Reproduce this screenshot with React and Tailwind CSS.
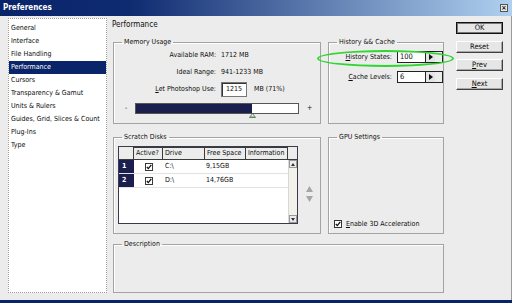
import React from 'react';

const items = [
  'General',
  'Interface',
  'File Handling',
  'Performance',
  'Cursors',
  'Transparency & Gamut',
  'Units & Rulers',
  'Guides, Grid, Slices & Count',
  'Plug-Ins',
  'Type',
];

function Check() {
  return (
    <span className="inline-flex h-[8px] w-[8px] items-center justify-center border border-[#3a3a3a] bg-white">
      <svg width="6" height="6" viewBox="0 0 6 6">
        <path d="M0.8 3 L2.3 4.6 L5.3 0.8" fill="none" stroke="#111" strokeWidth="1.3" />
      </svg>
    </span>
  );
}

function Group({ title, className, children }) {
  return (
    <fieldset className={`border border-[#a3a3a3] shadow-[inset_1px_1px_0_#fff] ${className}`}>
      <legend className="ml-[8px] px-[2px] text-[7px] leading-[9px]">{title}</legend>
      {children}
    </fieldset>
  );
}

function Spin({ value }) {
  return (
    <div className="flex h-[12px] border border-[#222]">
      <div className="w-[27px] bg-white pl-[2px] text-[7.5px] leading-[10px]">{value}</div>
      <div className="flex w-[10px] items-center justify-center border-l border-[#222] bg-[#e4e4e4]">
        <svg width="4" height="6" viewBox="0 0 4 6">
          <path d="M0 0 L4 3 L0 6 Z" fill="#111" />
        </svg>
      </div>
    </div>
  );
}

function Btn({ children, primary }) {
  if (primary) {
    return (
      <div className="h-[12px] w-[47px] border border-[#111]">
        <div className="flex h-full items-center justify-center border border-[#777] bg-[#e6e6e6] text-[7.5px]">
          {children}
        </div>
      </div>
    );
  }
  return (
    <div className="flex h-[12px] w-[47px] items-center justify-center border border-t-white border-l-white border-r-[#404040] border-b-[#404040] bg-[#e6e6e6] text-[7.5px] shadow-[inset_-1px_-1px_0_#a8a8a8]">
      {children}
    </div>
  );
}

export default function App() {
  return (
    <div className="relative flex h-[303px] w-[512px] flex-col overflow-hidden border-b-[3px] border-[#0a246a] bg-[#ececec] font-['DejaVu_Sans_Condensed','DejaVu_Sans','Liberation_Sans',sans-serif] text-[7px] text-[#0c0c0c]">
      <div className="flex h-[16px] shrink-0 items-center justify-between bg-[linear-gradient(90deg,#0a246a_0%,#0e2a70_25%,#b0d0f0_100%)] pl-[3px] pr-[4px]">
        <span className="text-[8px] font-bold text-white">Preferences</span>
        <span className="flex h-[8px] w-[8px] items-center justify-center border border-[#555] bg-[#e8e8e8] text-[7px] leading-none font-bold">×</span>
      </div>

      <div className="flex flex-1 border-r border-[#9a9a9a]">
        <div className="ml-[8px] mt-[2px] h-[275px] w-[99px] border border-dotted border-[#9c9c9c] bg-white pt-[3px]">
          {items.map((it) => (
            <div
              key={it}
              className={`h-[13px] pl-[2px] leading-[13px] whitespace-nowrap ${it === 'Performance' ? 'bg-[#0a246a] text-white' : ''}`}
            >
              {it}
            </div>
          ))}
        </div>

        <div className="ml-[6px] flex w-[331px] flex-col">
          <div className="-ml-[1px] mt-[4px] h-[10px] text-[8px] leading-[10px]">Performance</div>

          <div className="mt-[8px] flex gap-[7px]">
            <Group title="Memory Usage" className="h-[86px] w-[208px]">
              <div className="grid grid-cols-[102px_auto] gap-x-[5px]">
                <div className="h-[17px] text-right leading-[17px]">Available RAM:</div>
                <div className="h-[17px] leading-[17px]">1712 MB</div>
                <div className="h-[17px] text-right leading-[17px]">Ideal Range:</div>
                <div className="h-[17px] leading-[17px]">941-1233 MB</div>
                <div className="h-[17px] text-right leading-[17px]">
                  <u>L</u>et Photoshop Use:
                </div>
                <div className="flex h-[17px] items-center">
                  <div className="h-[15px] w-[26px] border border-[#777] bg-white text-center leading-[13px] shadow-[inset_1px_1px_0_#333]">1215</div>
                  <span className="ml-[7px]">MB (71%)</span>
                </div>
              </div>
              <div className="mt-[5px] flex items-center pl-[11px]">
                <span className="w-[10px] leading-none">-</span>
                <div className="relative h-[11px] w-[164px] border border-[#555] bg-white">
                  <div className="h-full w-[116px] bg-[#1b1f4d]" />
                  <svg className="absolute left-[113px] top-[9px]" width="7" height="5" viewBox="0 0 7 5">
                    <path d="M3.5 0.5 L6.5 4.5 L0.5 4.5 Z" fill="#f4f4f4" stroke="#555" strokeWidth="0.8" />
                    <path d="M1.5 4 L5.5 4" stroke="#3a3" strokeWidth="1" />
                  </svg>
                </div>
                <span className="ml-[8px] leading-none">+</span>
              </div>
            </Group>

            <Group title="History && Cache" className="h-[86px] w-[116px]">
              <div className="mt-[4px] grid grid-cols-[63px_auto] items-center gap-x-[5px] gap-y-[8px]">
                <div className="text-right">
                  <u>H</u>istory States:
                </div>
                <Spin value="100" />
                <div className="text-right">
                  <u>C</u>ache Levels:
                </div>
                <Spin value="6" />
              </div>
            </Group>
          </div>

          <div className="mt-[9px] flex gap-[7px]">
            <Group title="Scratch Disks" className="h-[101px] w-[208px]">
              <div className="ml-[4px] mt-[4px] flex items-center">
                <div className="flex h-[78px] w-[180px] flex-col border border-[#3a3a4a] bg-white">
                  <div className="flex h-[13px] shrink-0 bg-[#ececec] leading-[11px]">
                    <div className="w-[15px] border-r border-b border-[#3a3a3a]" />
                    <div className="w-[29px] border border-l-0 border-[#3a3a3a] pl-[2px]">Active?</div>
                    <div className="w-[42px] border border-l-0 border-[#3a3a3a] pl-[2px]">Drive</div>
                    <div className="w-[41px] border border-l-0 border-[#3a3a3a] pl-[2px]">Free Space</div>
                    <div className="w-[42px] border border-l-0 border-[#3a3a3a] pl-[2px]">Information</div>
                    <div className="flex-1 border-b border-[#3a3a3a]" />
                  </div>
                  <div className="flex flex-1">
                    <div className="flex-1">
                      {[
                        ['1', 'C:\\', '9,15GB'],
                        ['2', 'D:\\', '14,76GB'],
                      ].map((r) => (
                        <div key={r[0]} className="flex h-[14px] border-b border-[#e2e2e2] leading-[13px]">
                          <div className="w-[15px] bg-[#1b1f4d] pl-[3px] font-bold text-white">{r[0]}</div>
                          <div className="flex w-[29px] items-center justify-center">
                            <Check />
                          </div>
                          <div className="w-[42px] pl-[2px]">{r[1]}</div>
                          <div className="w-[41px] pl-[1px]">{r[2]}</div>
                        </div>
                      ))}
                    </div>
                    <div className="flex w-[9px] flex-col border-l border-[#d8d8d8] bg-[#f3f2ea]">
                      <div className="flex h-[8px] items-center justify-center border border-[#999] bg-[#ececec]">
                        <svg width="4" height="3" viewBox="0 0 4 3"><path d="M2 0 L4 3 L0 3 Z" fill="#333" /></svg>
                      </div>
                      <div className="flex-1" />
                      <div className="flex h-[8px] items-center justify-center border border-[#999] bg-[#ececec]">
                        <svg width="4" height="3" viewBox="0 0 4 3"><path d="M0 0 L4 0 L2 3 Z" fill="#333" /></svg>
                      </div>
                    </div>
                  </div>
                </div>
                <div className="ml-[8px] mt-[18px] flex flex-col gap-[4px]">
                  <svg width="7" height="6" viewBox="0 0 7 6"><path d="M3.5 0 L7 6 L0 6 Z" fill="#a6a6a6" /></svg>
                  <svg width="7" height="6" viewBox="0 0 7 6"><path d="M0 0 L7 0 L3.5 6 Z" fill="#a6a6a6" /></svg>
                </div>
              </div>
            </Group>

            <Group title="GPU Settings" className="flex h-[101px] w-[116px] flex-col">
              <div className="flex-1" />
              <div className="mb-[4px] flex items-center gap-[4px] pl-[5px]">
                <span className="inline-flex h-[8px] w-[8px] items-center justify-center border border-[#333] bg-white">
                  <svg width="6" height="6" viewBox="0 0 6 6">
                    <path d="M0.8 3 L2.3 4.6 L5.3 0.8" fill="none" stroke="#111" strokeWidth="1.3" />
                  </svg>
                </span>
                <span>
                  <u>E</u>nable 3D Acceleration
                </span>
              </div>
            </Group>
          </div>

          <Group title="Description" className="mt-[6px] h-[53px] w-[331px]" />
        </div>

        <div className="ml-[12px] mt-[6px] flex flex-col gap-[6.5px]">
          <Btn primary>OK</Btn>
          <Btn>Reset</Btn>
          <Btn>
            <u>P</u>rev
          </Btn>
          <Btn>
            <u>N</u>ext
          </Btn>
        </div>
      </div>

      <div className="absolute left-[317px] top-[50px] h-[17px] w-[137px] rounded-[50%] border-2 border-[#2fd62f]" />
    </div>
  );
}
